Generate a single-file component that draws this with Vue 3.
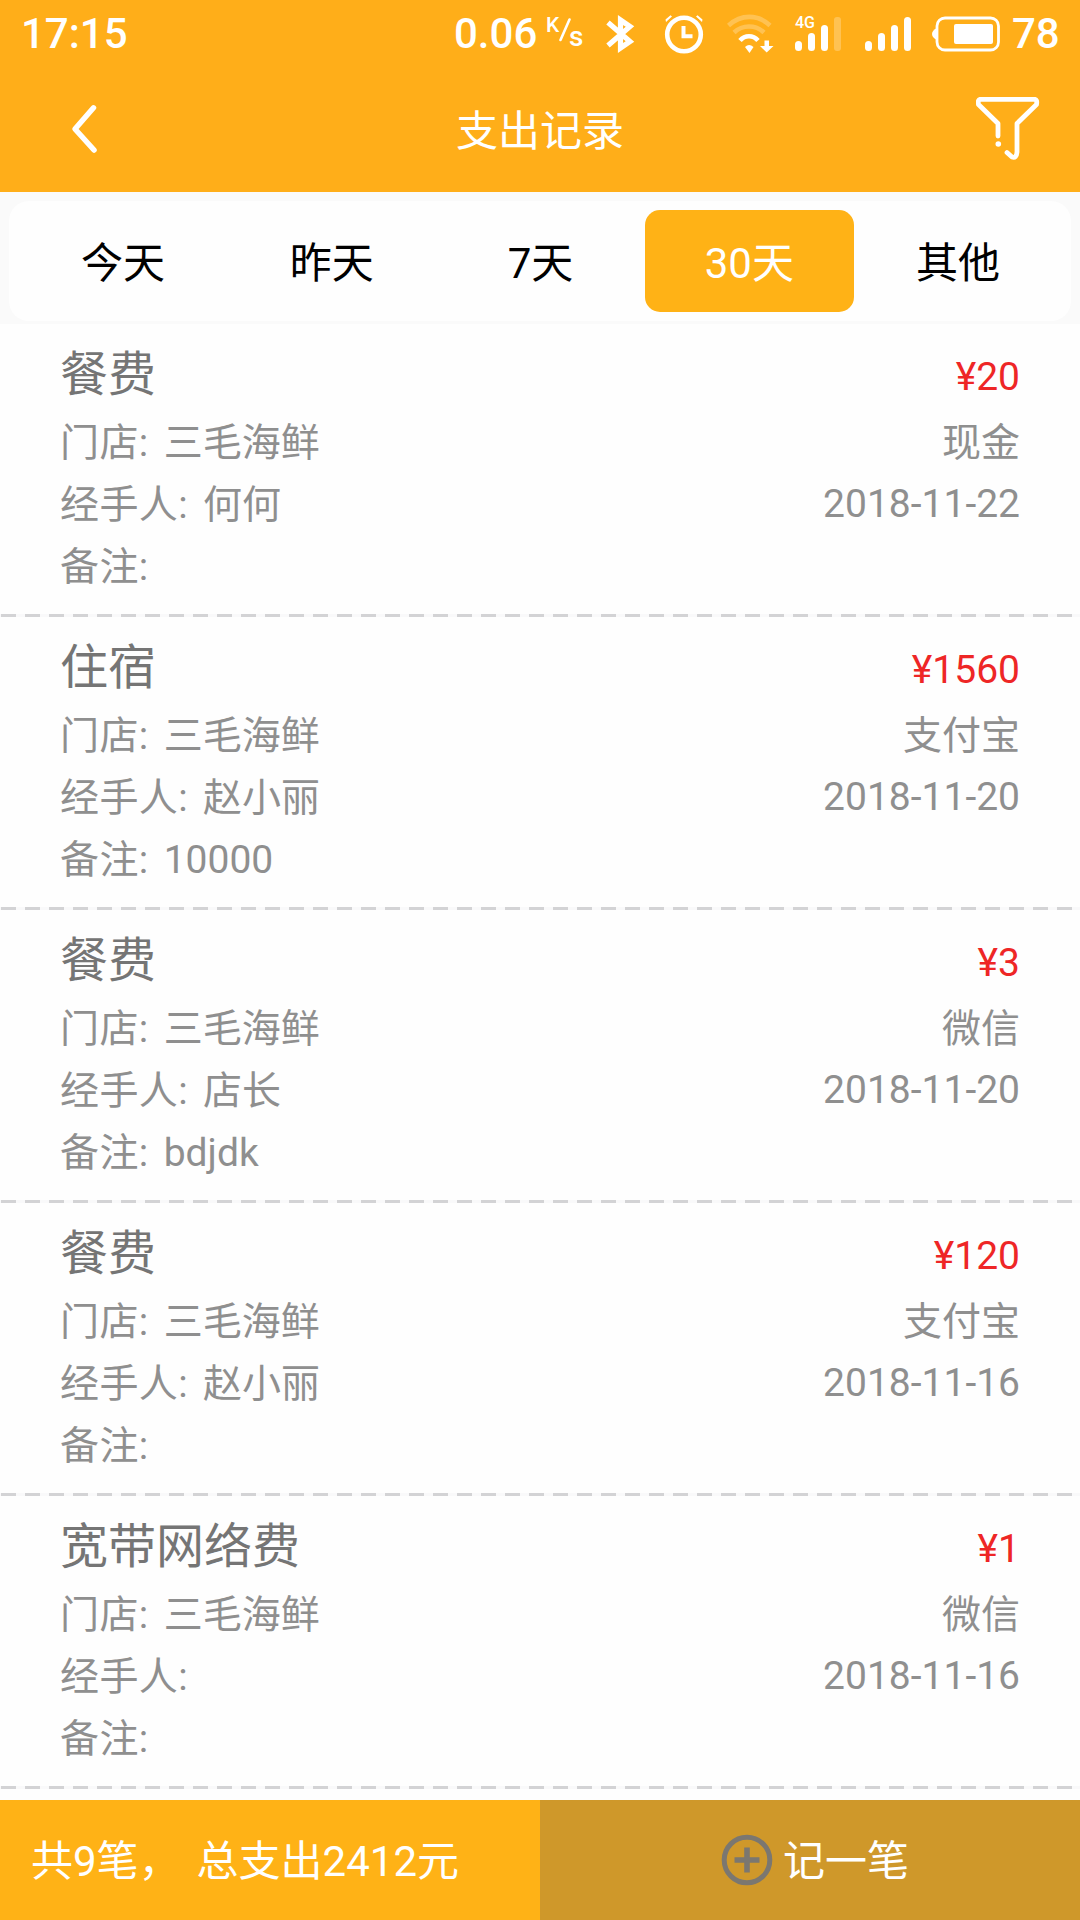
<template>
  <div class="page">
    <header class="header">
      <div class="status-bar">
        <span class="clock">17:15</span>
        <span class="speed">0.06</span>
        <span class="unit">
          <span class="unit-k">K</span>
          <svg class="unit-slash" width="12" height="24" viewBox="0 0 12 24">
            <path d="M10.500 1.500L1.500 22" stroke="#fff" stroke-width="2.600" stroke-linecap="round" />
          </svg>
          <span class="unit-s">s</span>
        </span>
        <svg class="bluetooth" width="30" height="38" viewBox="0 0 30 38" fill="none" stroke="#fff" stroke-width="5.200">
          <path d="M2 7.500L24 26.500L14.500 33V5L24 11.500L2 30.500" />
        </svg>
        <svg class="alarm" width="40" height="40" viewBox="0 0 40 40" fill="none" stroke="#fff">
          <circle cx="20" cy="20.500" r="16.800" stroke-width="4.600" />
          <path d="M19.500 12V22.300H28.500" stroke-width="4" />
          <path d="M1.500 5.500L6.500 1.300L8 2.500L2 8ZM38.500 5.500L33.500 1.300L32 2.500L38 8Z" fill="#fff" stroke="none" />
        </svg>
        <svg class="wifi" width="48" height="40" viewBox="0 0 48 40" fill="none" stroke="#fff" stroke-width="4.600">
          <path d="M1.500 11.500C14 0 31 0 43 11.500" opacity="0.25" />
          <path d="M7 18.500C15.500 10.500 28.500 10.500 37 18.500" opacity="0.25" />
          <path d="M13 26.500C18 20.800 26 20.800 31 26.500" />
          <path d="M18 33Q22 29 26.500 33L22.500 39Z" fill="#fff" stroke="none" />
          <path d="M37.500 26.500H42V32H46.500L39.700 38.500L33 32H37.500Z" fill="#fff" stroke="none" />
        </svg>
        <span class="mobile">
          <span class="net-type">4G</span>
          <svg width="48" height="36" viewBox="0 0 48 36" fill="#fff">
            <rect x="0" y="25" width="7" height="10" rx="3.500" />
            <rect x="13" y="17" width="7" height="18" rx="3.500" />
            <rect x="26" y="9" width="7" height="26" rx="3.500" />
            <rect x="39" y="1" width="7" height="34" rx="3" opacity="0.25" />
          </svg>
        </span>
        <svg class="signal" width="48" height="36" viewBox="0 0 48 36" fill="#fff">
          <rect x="0" y="25" width="7" height="10" rx="3.500" />
          <rect x="13" y="17" width="7" height="18" rx="3.500" />
          <rect x="26" y="9" width="7" height="26" rx="3.500" />
          <rect x="39" y="1" width="7" height="34" rx="3.500" />
        </svg>
        <svg class="battery" width="68" height="36" viewBox="0 0 68 36" fill="none">
          <rect x="5" y="2" width="61.500" height="32" rx="8" stroke="#fff" stroke-width="2.800" />
          <path d="M5 12V24Q0 21.500 0 18Q0 14.500 5 12Z" fill="#fff" />
          <rect x="22" y="8" width="39" height="20" rx="2" fill="#fff" />
        </svg>
        <span class="level">78</span>
      </div>
      <div class="nav-bar">
        <svg class="back" width="30" height="54" viewBox="0 0 30 54" fill="none" stroke="#fff" stroke-width="5.500" stroke-linecap="round" stroke-linejoin="round">
          <path d="M23.500 5.800L5 27L24 48" />
        </svg>
        <h1>支出记录</h1>
        <svg class="filter" width="64" height="64" viewBox="0 0 64 64" fill="none" stroke="#fff" stroke-width="4.800" stroke-linecap="round" stroke-linejoin="round">
          <path d="M22 39V26.500L2.500 7.500Q1.500 2.300 4.500 2.300H58.500Q61.500 2.300 60.500 7.500L41 26.500V55Q40.500 61.500 36 60L31 55.500" />
          <circle cx="22.300" cy="47" r="2.800" fill="#fff" stroke="none" />
        </svg>
      </div>
    </header>

    <div class="tabs-wrap">
      <div class="tabs">
        <div
            v-for="tab in tabs"
            :key="tab"
            class="tab"
            :class="{ active: tab === activeTab }"
            @click="activeTab = tab"
        >
          {{ tab }}
        </div>
      </div>
    </div>

    <div class="list">
      <div v-for="(item, index) in records" :key="index" class="record">
        <div class="info">
          <h2>{{ item.type }}</h2>
          <p>门店:<span>{{ item.store }}</span></p>
          <p>经手人:<span>{{ item.handler }}</span></p>
          <p>备注:<span>{{ item.remark }}</span></p>
        </div>
        <div class="detail">
          <div class="amount">¥{{ item.amount }}</div>
          <p>{{ item.payment }}</p>
          <p class="date">{{ item.date }}</p>
        </div>
      </div>
    </div>

    <footer class="footer">
      <div class="summary">共9笔，<span>总支出2412元</span></div>
      <div class="add">
        <svg width="52" height="52" viewBox="0 0 52 52" fill="none" stroke="#7b7770">
          <circle cx="26" cy="26" r="22.800" stroke-width="5" />
          <path d="M26 13.500V38.500M13.500 26H38.500" stroke-width="5.600" />
        </svg>
        <span>记一笔</span>
      </div>
    </footer>
  </div>
</template>

<script setup>
import { ref } from 'vue'

const tabs = ['今天', '昨天', '7天', '30天', '其他']
const activeTab = ref('30天')

const records = ref([
  { type: '餐费', store: '三毛海鲜', handler: '何何', remark: '', amount: 20, payment: '现金', date: '2018-11-22' },
  { type: '住宿', store: '三毛海鲜', handler: '赵小丽', remark: '10000', amount: 1560, payment: '支付宝', date: '2018-11-20' },
  { type: '餐费', store: '三毛海鲜', handler: '店长', remark: 'bdjdk', amount: 3, payment: '微信', date: '2018-11-20' },
  { type: '餐费', store: '三毛海鲜', handler: '赵小丽', remark: '', amount: 120, payment: '支付宝', date: '2018-11-16' },
  { type: '宽带网络费', store: '三毛海鲜', handler: '', remark: '', amount: 1, payment: '微信', date: '2018-11-16' }
])
</script>

<style>
body {
  margin: 0;
}
</style>

<style scoped>
.page {
  display: flex;
  flex-direction: column;
  width: 1080px;
  height: 1920px;
  overflow: hidden;
  background: #fefefe;
  font-family: Roboto, "Noto Sans CJK SC", sans-serif;
}

.page svg {
  display: block;
  flex-shrink: 0;
}

h1,
h2,
p {
  margin: 0;
  font-weight: 400;
}

.header {
  height: 192px;
  background: #ffae19;
  color: #fff;
}

.status-bar {
  display: flex;
  align-items: center;
  height: 68px;
  font-size: 42px;
  font-weight: 500;
  line-height: 70px;
  white-space: nowrap;
}

.clock {
  width: 433px;
  padding-left: 21px;
}

.speed {
  width: 92px;
}

.unit {
  display: flex;
  width: 60px;
  padding-top: 5px;
}

.unit-k {
  width: 13px;
  font-size: 21px;
  line-height: 58px;
}

.unit-slash {
  margin-top: 22px;
}

.unit-s {
  margin-left: -2px;
  font-size: 28px;
  line-height: 82px;
}

.alarm {
  margin-left: 28px;
}

.wifi {
  margin-left: 23px;
}

.mobile {
  position: relative;
  margin-left: 20px;
}

.net-type {
  position: absolute;
  top: -1px;
  left: 0;
  font-size: 16px;
  line-height: 16px;
}

.signal {
  margin-left: 22px;
}

.battery {
  margin-left: 19px;
}

.level {
  margin-left: 12px;
}

.nav-bar {
  display: flex;
  align-items: center;
  height: 122px;
  padding: 0 40px 0 70px;
}

.nav-bar h1 {
  flex: 1;
  padding: 6px 0 0 4px;
  font-size: 42px;
  line-height: 60px;
  text-align: center;
}

.tabs-wrap {
  height: 132px;
  padding: 9px 9px 3px;
  box-sizing: border-box;
  background: #fafafa;
}

.tabs {
  display: flex;
  height: 120px;
  padding: 9px 8px 9px 10px;
  box-sizing: border-box;
  border-radius: 20px;
  background: #fefefe;
}

.tab {
  flex: 1;
  border-radius: 15px;
  color: #000;
  font-size: 42px;
  line-height: 107px;
  text-align: center;
  text-indent: -1px;
}

.tab.active {
  background: #ffb216;
  color: #fff;
}

.list {
  flex: 1;
}

.record {
  display: flex;
  justify-content: space-between;
  height: 293px;
  padding: 12px 60px 0;
  box-sizing: border-box;
  background: repeating-linear-gradient(to right, #f9f9fa 0 1px, #d3d3d5 1px 16px, #f9f9fa 16px 24px) left bottom / 100% 3px no-repeat;
}

.record h2 {
  height: 76px;
  color: #757575;
  font-size: 48px;
  line-height: 77px;
}

.record p {
  height: 62px;
  color: #8f8f8f;
  font-size: 39px;
  line-height: 62px;
}

.record p.date {
  line-height: 60px;
}

.info p {
  letter-spacing: 0.4px;
}

.record p span {
  margin-left: 15px;
  letter-spacing: 0;
}

.detail {
  text-align: right;
}

.amount {
  height: 76px;
  color: #ee2626;
  font-size: 39px;
  line-height: 82px;
}

.footer {
  display: flex;
  height: 120px;
  color: #fff;
  font-size: 42px;
  line-height: 124px;
}

.summary {
  width: 540px;
  padding-left: 31px;
  box-sizing: border-box;
  background: #ffb216;
}

.summary span {
  margin-left: 16px;
}

.add {
  display: flex;
  align-items: center;
  justify-content: center;
  width: 540px;
  padding-left: 10px;
  box-sizing: border-box;
  background: #cf982a;
}

.add span {
  margin-left: 10px;
  padding-top: 4px;
}
</style>
